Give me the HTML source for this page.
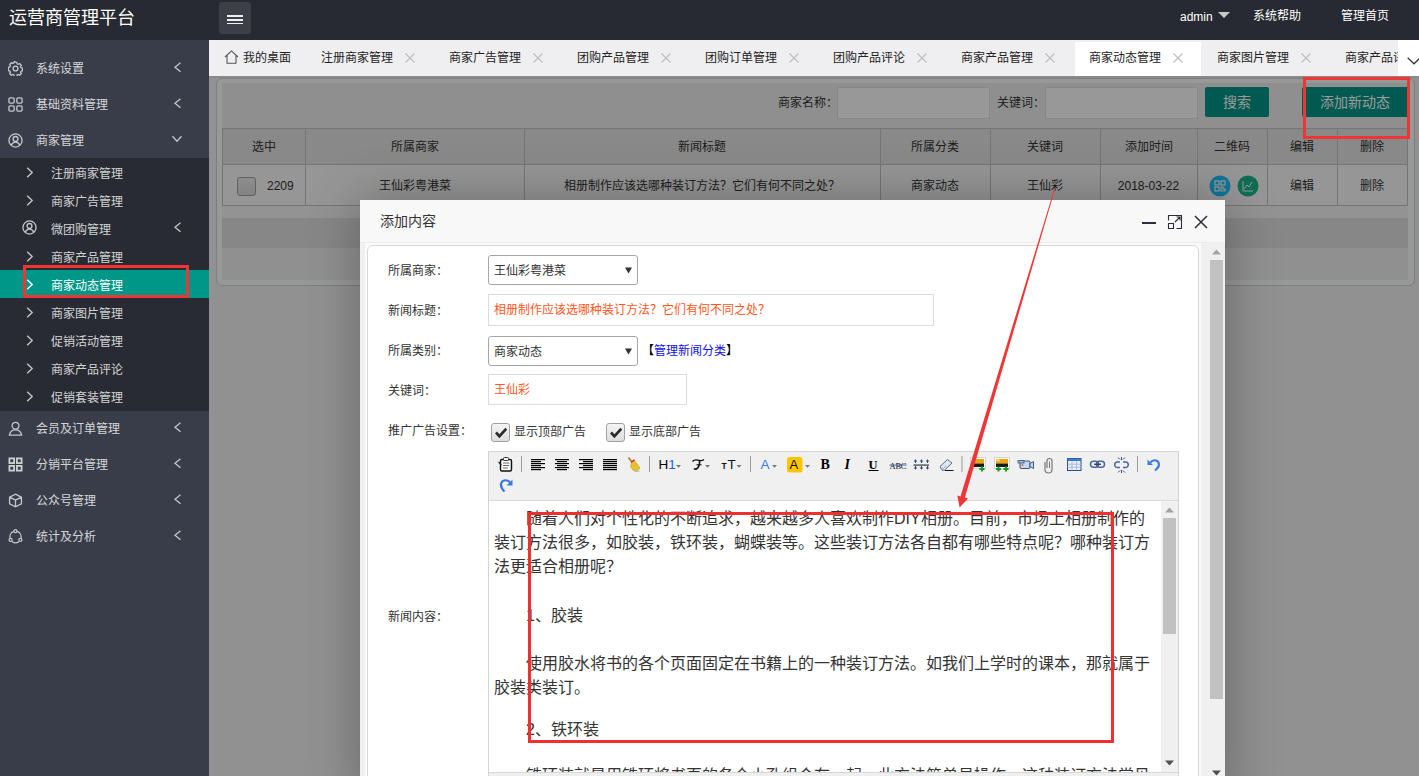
<!DOCTYPE html>
<html lang="zh-CN"><head><meta charset="utf-8">
<style>
*{box-sizing:border-box}
html,body{margin:0;padding:0}
body{width:1419px;height:776px;overflow:hidden;position:relative;font-family:"Liberation Sans",sans-serif;font-size:12px;color:#333;background:#f2f2f2}
.a{position:absolute;white-space:nowrap}
#hd{left:0;top:0;width:1419px;height:40px;background:#272a32}
#sd{left:0;top:40px;width:209px;height:736px;background:#393d49;overflow:hidden}
.nv{position:absolute;left:0;width:209px;height:36px;color:rgba(255,255,255,.8)}
.nv .t{position:absolute;left:36px;top:1px;line-height:36px;font-size:12px}
.nv svg{position:absolute}
.sub{position:absolute;left:0;top:118px;width:209px;height:253px;background:#282b33}
.dd{position:absolute;left:0;width:209px;height:28px;color:rgba(255,255,255,.8)}
.dd .t{position:absolute;left:51px;top:2px;line-height:28px;font-size:12px}
.dd svg{position:absolute;left:26px;top:9px}
#tb{left:209px;top:40px;width:1210px;height:36px;background:#efeff1;overflow:hidden}
.tab{position:absolute;top:2px;height:34px;width:126px;color:#222}
.tab .t{position:absolute;left:14px;top:0;line-height:33px;font-size:12px}
.tab .x{position:absolute;left:98px;top:11px}
#ct{left:209px;top:76px;width:1210px;height:700px;background:#f2f2f2;overflow:hidden}
</style></head><body>

<!-- HEADER -->
<div id="hd" class="a">
  <div class="a" style="left:9px;top:1px;line-height:34px;font-size:18px;color:#fff">运营商管理平台</div>
  <div class="a" style="left:219px;top:2px;width:32px;height:32px;border-radius:3px;background:#3c3f48">
    <div class="a" style="left:8px;top:13px;width:16px;height:2px;background:#eee"></div>
    <div class="a" style="left:8px;top:17px;width:16px;height:1.8px;background:#eee"></div>
    <div class="a" style="left:8px;top:21px;width:16px;height:1.4px;background:#eee"></div>
  </div>
  <div class="a" style="left:1180px;top:1px;line-height:33px;font-size:12px;color:#fff">admin</div>
  <svg class="a" style="left:1218px;top:12px" width="12" height="7"><path d="M0 0H12L6 6Z" fill="#c8c8c8"/></svg>
  <div class="a" style="left:1253px;top:0;line-height:33px;font-size:12px;color:#fff">系统帮助</div>
  <div class="a" style="left:1341px;top:0;line-height:33px;font-size:12px;color:#fff">管理首页</div>
</div>

<!-- SIDEBAR -->
<div id="sd" class="a">
<div class="nv" style="top:10px"><svg style="left:7.5px;top:10.5px" width="15" height="15" viewBox="0 0 16 16"><path d="M8 1.2l1.3.2.4 1.6 1.2.6 1.5-.8 1.8 1.8-.8 1.5.6 1.2 1.6.4v2.6l-1.6.4-.6 1.2.8 1.5-1.8 1.8-1.5-.8-1.2.6-.4 1.6H6.7l-.4-1.6-1.2-.6-1.5.8-1.8-1.8.8-1.5-.6-1.2-1.6-.4V6.7l1.6-.4.6-1.2-.8-1.5 1.8-1.8 1.5.8 1.2-.6.4-1.6z" stroke="#c5c6ca" fill="none" stroke-width="1.4"/><circle cx="8" cy="8" r="2.6" stroke="#c5c6ca" fill="none" stroke-width="1.4"/></svg><div class="t">系统设置</div><svg style="left:173px;top:12px" width="9" height="11" viewBox="0 0 9 11"><path d="M7.5 .8L2 5.3l5.5 4.5" stroke="#c5c6ca" fill="none" stroke-width="1.3"/></svg></div>
<div class="nv" style="top:46px"><svg style="left:7.5px;top:10.5px" width="15" height="15" viewBox="0 0 16 16"><rect x="1" y="1" width="5.6" height="5.6" rx="1.2" stroke="#c5c6ca" fill="none" stroke-width="1.4"/><rect x="9.4" y="1" width="5.6" height="5.6" rx="1.2" stroke="#c5c6ca" fill="none" stroke-width="1.4"/><rect x="1" y="9.4" width="5.6" height="5.6" rx="1.2" stroke="#c5c6ca" fill="none" stroke-width="1.4"/><rect x="9.4" y="9.4" width="5.6" height="5.6" rx="1.2" stroke="#c5c6ca" fill="none" stroke-width="1.4"/></svg><div class="t">基础资料管理</div><svg style="left:173px;top:12px" width="9" height="11" viewBox="0 0 9 11"><path d="M7.5 .8L2 5.3l5.5 4.5" stroke="#c5c6ca" fill="none" stroke-width="1.3"/></svg></div>
<div class="nv" style="top:82px"><svg style="left:7.5px;top:10.5px" width="15" height="15" viewBox="0 0 16 16"><circle cx="8" cy="8" r="7" stroke="#c5c6ca" fill="none" stroke-width="1.4"/><circle cx="8" cy="6.3" r="2.6" stroke="#c5c6ca" fill="none" stroke-width="1.4"/><path d="M3.4 13c.8-2.2 2.6-3.3 4.6-3.3s3.8 1.1 4.6 3.3" stroke="#c5c6ca" fill="none" stroke-width="1.4"/></svg><div class="t">商家管理</div><svg style="left:171px;top:13px" width="12" height="8" viewBox="0 0 12 8"><path d="M1.5 1.2l4.5 5 4.5-5" stroke="#c5c6ca" fill="none" stroke-width="1.3"/></svg></div>
<div class="sub">
<div class="dd" style="top:0px"><svg width="8" height="11" viewBox="0 0 8 11"><path d="M1.2 .7l5 4.8-5 4.8" stroke="#c5c6ca" fill="none" stroke-width="1.4"/></svg><div class="t">注册商家管理</div></div>
<div class="dd" style="top:28px"><svg width="8" height="11" viewBox="0 0 8 11"><path d="M1.2 .7l5 4.8-5 4.8" stroke="#c5c6ca" fill="none" stroke-width="1.4"/></svg><div class="t">商家广告管理</div></div>
<div class="dd" style="top:56px"><svg style="left:22px;top:6px" width="15" height="15" viewBox="0 0 16 16"><circle cx="8" cy="8" r="7" stroke="#c5c6ca" fill="none" stroke-width="1.4"/><circle cx="8" cy="6.3" r="2.6" stroke="#c5c6ca" fill="none" stroke-width="1.4"/><path d="M3.4 13c.8-2.2 2.6-3.3 4.6-3.3s3.8 1.1 4.6 3.3" stroke="#c5c6ca" fill="none" stroke-width="1.4"/></svg><div class="t">微团购管理</div><svg style="left:173px;top:8px" width="9" height="11" viewBox="0 0 9 11"><path d="M7.5 .8L2 5.3l5.5 4.5" stroke="#c5c6ca" fill="none" stroke-width="1.3"/></svg></div>
<div class="dd" style="top:84px"><svg width="8" height="11" viewBox="0 0 8 11"><path d="M1.2 .7l5 4.8-5 4.8" stroke="#c5c6ca" fill="none" stroke-width="1.4"/></svg><div class="t">商家产品管理</div></div>
<div class="dd" style="top:112px;background:#009688;color:#fff"><svg width="8" height="11" viewBox="0 0 8 11"><path d="M1.2 .7l5 4.8-5 4.8" stroke="#fff" fill="none" stroke-width="1.4"/></svg><div class="t">商家动态管理</div></div>
<div class="dd" style="top:140px"><svg width="8" height="11" viewBox="0 0 8 11"><path d="M1.2 .7l5 4.8-5 4.8" stroke="#c5c6ca" fill="none" stroke-width="1.4"/></svg><div class="t">商家图片管理</div></div>
<div class="dd" style="top:168px"><svg width="8" height="11" viewBox="0 0 8 11"><path d="M1.2 .7l5 4.8-5 4.8" stroke="#c5c6ca" fill="none" stroke-width="1.4"/></svg><div class="t">促销活动管理</div></div>
<div class="dd" style="top:196px"><svg width="8" height="11" viewBox="0 0 8 11"><path d="M1.2 .7l5 4.8-5 4.8" stroke="#c5c6ca" fill="none" stroke-width="1.4"/></svg><div class="t">商家产品评论</div></div>
<div class="dd" style="top:224px"><svg width="8" height="11" viewBox="0 0 8 11"><path d="M1.2 .7l5 4.8-5 4.8" stroke="#c5c6ca" fill="none" stroke-width="1.4"/></svg><div class="t">促销套装管理</div></div>
</div>
<div class="nv" style="top:370px"><svg style="left:7.5px;top:10.5px" width="15" height="15" viewBox="0 0 16 16"><circle cx="8" cy="5" r="3.6" stroke="#c5c6ca" fill="none" stroke-width="1.4"/><path d="M1.5 15c.6-3.6 3.2-5.6 6.5-5.6s5.9 2 6.5 5.6z" stroke="#c5c6ca" fill="none" stroke-width="1.4"/></svg><div class="t">会员及订单管理</div><svg style="left:173px;top:12px" width="9" height="11" viewBox="0 0 9 11"><path d="M7.5 .8L2 5.3l5.5 4.5" stroke="#c5c6ca" fill="none" stroke-width="1.3"/></svg></div>
<div class="nv" style="top:406px"><svg style="left:7.5px;top:10.5px" width="15" height="15" viewBox="0 0 16 16"><g stroke="#d0d1d4" fill="none" stroke-width="1.9"><rect x="1.5" y="1.5" width="5" height="5"/><rect x="9.5" y="1.5" width="5" height="5"/><rect x="1.5" y="9.5" width="5" height="5"/><rect x="9.5" y="9.5" width="5" height="5"/></g></svg><div class="t">分销平台管理</div><svg style="left:173px;top:12px" width="9" height="11" viewBox="0 0 9 11"><path d="M7.5 .8L2 5.3l5.5 4.5" stroke="#c5c6ca" fill="none" stroke-width="1.3"/></svg></div>
<div class="nv" style="top:442px"><svg style="left:7.5px;top:10.5px" width="15" height="15" viewBox="0 0 16 16"><path d="M8 1.2l6.3 3.2v7.2L8 14.8 1.7 11.6V4.4z M1.7 4.4L8 7.6l6.3-3.2 M8 7.6v7.2" stroke="#c5c6ca" fill="none" stroke-width="1.4"/></svg><div class="t">公众号管理</div><svg style="left:173px;top:12px" width="9" height="11" viewBox="0 0 9 11"><path d="M7.5 .8L2 5.3l5.5 4.5" stroke="#c5c6ca" fill="none" stroke-width="1.3"/></svg></div>
<div class="nv" style="top:478px"><svg style="left:7.5px;top:10.5px" width="15" height="15" viewBox="0 0 16 16"><g stroke="#c5c6ca" fill="none" stroke-width="1.4"><path d="M6.2 2.6A6 6 0 0 0 2.2 9.6"/><path d="M9.8 2.6A6 6 0 0 1 13.8 9.6"/><path d="M4.3 13.4A6 6 0 0 0 11.7 13.4"/><circle cx="8" cy="2.3" r="1.6"/><circle cx="2.8" cy="11.6" r="1.6"/><circle cx="13.2" cy="11.6" r="1.6"/></g></svg><div class="t">统计及分析</div><svg style="left:173px;top:12px" width="9" height="11" viewBox="0 0 9 11"><path d="M7.5 .8L2 5.3l5.5 4.5" stroke="#c5c6ca" fill="none" stroke-width="1.3"/></svg></div>
</div>

<!-- TABS -->
<div id="tb" class="a">
<div class="a" style="left:0;top:0;height:36px;width:98px"><svg class="a" style="left:15px;top:10px" width="15" height="14" viewBox="0 0 15 14"><path d="M1 7L7.5 .9 14 7 M3 5.3V13.3h9V5.3" stroke="#555" fill="none" stroke-width="1.1"/></svg><div class="a" style="left:34px;top:1px;line-height:35px;font-size:12px;color:#222">我的桌面</div></div>
<div class="tab" style="left:98px;"><div class="t">注册商家管理</div><svg class="x" width="10" height="10" viewBox="0 0 10 10"><path d="M.5 .5l9 9M9.5 .5L.5 9.5" stroke="#bdbdbd" stroke-width="1.1"/></svg></div>
<div class="tab" style="left:226px;"><div class="t">商家广告管理</div><svg class="x" width="10" height="10" viewBox="0 0 10 10"><path d="M.5 .5l9 9M9.5 .5L.5 9.5" stroke="#bdbdbd" stroke-width="1.1"/></svg></div>
<div class="tab" style="left:354px;"><div class="t">团购产品管理</div><svg class="x" width="10" height="10" viewBox="0 0 10 10"><path d="M.5 .5l9 9M9.5 .5L.5 9.5" stroke="#bdbdbd" stroke-width="1.1"/></svg></div>
<div class="tab" style="left:482px;"><div class="t">团购订单管理</div><svg class="x" width="10" height="10" viewBox="0 0 10 10"><path d="M.5 .5l9 9M9.5 .5L.5 9.5" stroke="#bdbdbd" stroke-width="1.1"/></svg></div>
<div class="tab" style="left:610px;"><div class="t">团购产品评论</div><svg class="x" width="10" height="10" viewBox="0 0 10 10"><path d="M.5 .5l9 9M9.5 .5L.5 9.5" stroke="#bdbdbd" stroke-width="1.1"/></svg></div>
<div class="tab" style="left:738px;"><div class="t">商家产品管理</div><svg class="x" width="10" height="10" viewBox="0 0 10 10"><path d="M.5 .5l9 9M9.5 .5L.5 9.5" stroke="#bdbdbd" stroke-width="1.1"/></svg></div>
<div class="tab" style="left:866px;background:#fff;"><div class="t">商家动态管理</div><svg class="x" width="10" height="10" viewBox="0 0 10 10"><path d="M.5 .5l9 9M9.5 .5L.5 9.5" stroke="#bdbdbd" stroke-width="1.1"/></svg></div>
<div class="tab" style="left:994px;"><div class="t">商家图片管理</div><svg class="x" width="10" height="10" viewBox="0 0 10 10"><path d="M.5 .5l9 9M9.5 .5L.5 9.5" stroke="#bdbdbd" stroke-width="1.1"/></svg></div>
<div class="tab" style="left:1122px;"><div class="t">商家产品评论</div><svg class="x" width="10" height="10" viewBox="0 0 10 10"><path d="M.5 .5l9 9M9.5 .5L.5 9.5" stroke="#bdbdbd" stroke-width="1.1"/></svg></div>
<div class="a" style="left:1189px;top:0;width:21px;height:36px;background:#fff"><svg class="a" style="left:9px;top:17px" width="14" height="8" viewBox="0 0 14 8"><path d="M.7 .7L7 6.8 13.3 .7" stroke="#333" fill="none" stroke-width="1.2"/></svg></div>
</div>

<!-- CONTENT -->
<div id="ct" class="a">
<div class="a" style="left:-209px;top:-76px;width:1419px;height:776px">
<div class="a" style="left:209px;top:76px;width:1210px;height:2px;background:#e4e4e4"></div>
<div class="a" style="left:216px;top:78px;width:1199px;height:208px;border:1px solid #d2d2d2;border-radius:6px;background:#fcfdfd"></div>
<div class="a" style="left:222px;top:83px;width:1186px;height:45px;background:#efefef"></div>
<div class="a" style="left:778px;top:88px;line-height:31px;color:#333">商家名称：</div>
<div class="a" style="left:837px;top:87px;width:153px;height:32px;border:1px solid #e2e2e2;background:#fdfdfd"></div>
<div class="a" style="left:997px;top:88px;line-height:31px;color:#333">关键词：</div>
<div class="a" style="left:1045px;top:87px;width:153px;height:32px;border:1px solid #e2e2e2;background:#fdfdfd"></div>
<div class="a" style="left:1205px;top:87px;width:64px;height:30px;border-radius:2px;background:#009688;color:#fff;font-size:14px;line-height:30px;text-align:center">搜索</div>
<div class="a" style="left:1302px;top:87px;width:106px;height:30px;border-radius:2px 0 0 2px;background:#009688;color:#fff;font-size:14px;line-height:30px;text-align:center">添加新动态</div>
<div class="a" style="left:222px;top:128px;width:1186px;height:37px;background:#e4e4e4;border:1px solid #c4c4c4"></div>
<div class="a" style="left:222px;top:165px;width:1186px;height:41px;background:#fbfbfb;border:1px solid #c4c4c4;border-top:none"></div>
<div class="a" style="left:305px;top:128px;width:1px;height:78px;background:#c4c4c4"></div>
<div class="a" style="left:524px;top:128px;width:1px;height:78px;background:#c4c4c4"></div>
<div class="a" style="left:880px;top:128px;width:1px;height:78px;background:#c4c4c4"></div>
<div class="a" style="left:990px;top:128px;width:1px;height:78px;background:#c4c4c4"></div>
<div class="a" style="left:1100px;top:128px;width:1px;height:78px;background:#c4c4c4"></div>
<div class="a" style="left:1197px;top:128px;width:1px;height:78px;background:#c4c4c4"></div>
<div class="a" style="left:1267px;top:128px;width:1px;height:78px;background:#c4c4c4"></div>
<div class="a" style="left:1337px;top:128px;width:1px;height:78px;background:#c4c4c4"></div>
<div class="a" style="left:222px;top:129px;width:83px;line-height:36px;text-align:center;color:#333">选中</div>
<div class="a" style="left:305px;top:129px;width:219px;line-height:36px;text-align:center;color:#333">所属商家</div>
<div class="a" style="left:305px;top:166px;width:219px;line-height:41px;text-align:center;color:#333">王仙彩粤港菜</div>
<div class="a" style="left:524px;top:129px;width:356px;line-height:36px;text-align:center;color:#333">新闻标题</div>
<div class="a" style="left:524px;top:166px;width:356px;line-height:41px;text-align:center;color:#333">相册制作应该选哪种装订方法？它们有何不同之处？</div>
<div class="a" style="left:880px;top:129px;width:110px;line-height:36px;text-align:center;color:#333">所属分类</div>
<div class="a" style="left:880px;top:166px;width:110px;line-height:41px;text-align:center;color:#333">商家动态</div>
<div class="a" style="left:990px;top:129px;width:110px;line-height:36px;text-align:center;color:#333">关键词</div>
<div class="a" style="left:990px;top:166px;width:110px;line-height:41px;text-align:center;color:#333">王仙彩</div>
<div class="a" style="left:1100px;top:129px;width:97px;line-height:36px;text-align:center;color:#333">添加时间</div>
<div class="a" style="left:1100px;top:166px;width:97px;line-height:41px;text-align:center;color:#333">2018-03-22</div>
<div class="a" style="left:1197px;top:129px;width:70px;line-height:36px;text-align:center;color:#333">二维码</div>
<div class="a" style="left:1267px;top:129px;width:70px;line-height:36px;text-align:center;color:#333">编辑</div>
<div class="a" style="left:1267px;top:166px;width:70px;line-height:41px;text-align:center;color:#333">编辑</div>
<div class="a" style="left:1337px;top:129px;width:70px;line-height:36px;text-align:center;color:#333">删除</div>
<div class="a" style="left:1337px;top:166px;width:70px;line-height:41px;text-align:center;color:#333">删除</div>
<div class="a" style="left:237px;top:177px;width:19px;height:19px;border:1px solid #a0a0a0;border-radius:3px;background:linear-gradient(#ececec,#dadada)"></div>
<div class="a" style="left:267px;top:166px;line-height:41px;color:#333">2209</div>
<svg class="a" style="left:1209px;top:175px" width="22" height="22" viewBox="0 0 22 22"><circle cx="11" cy="11" r="10.5" fill="#1dc4ff"/><g fill="none" stroke="#fff" stroke-width="1.2"><rect x="6" y="6" width="4" height="4"/><rect x="12" y="6" width="4" height="4"/><rect x="6" y="12" width="4" height="4"/><path d="M12 12h2v2h2v2h-4z"/></g></svg>
<svg class="a" style="left:1237px;top:175px" width="22" height="22" viewBox="0 0 22 22"><circle cx="11" cy="11" r="10.5" fill="#1bb890"/><path d="M6 6v10h10 M7 14l3-4 2 2 3-5" fill="none" stroke="#fff" stroke-width="1"/></svg>
<div class="a" style="left:222px;top:206px;width:1186px;height:12px;background:#f5f5f5"></div>
<div class="a" style="left:222px;top:218px;width:1186px;height:30px;background:#e1e1e1"></div>
<div class="a" style="left:222px;top:248px;width:1186px;height:32px;background:#f0f0f0"></div>
</div>
<div class="a" style="left:0;top:0;width:1210px;height:700px;background:rgba(0,0,0,.4)"></div>
<div class="a" style="left:-209px;top:-76px;width:1419px;height:776px">
<div class="a" style="left:360px;top:200px;width:865px;height:600px;background:#f0f0f0;box-shadow:1px 1px 50px rgba(0,0,0,.3)"></div>
<div class="a" style="left:360px;top:200px;width:865px;height:43px;background:#f8f8f8;border-bottom:1px solid #ececec"></div>
<div class="a" style="left:380px;top:200px;line-height:42px;font-size:14px;color:#333">添加内容</div>
<div class="a" style="left:1142px;top:222px;width:14px;height:2px;background:#2e2d3c"></div>
<svg class="a" style="left:1167px;top:214px" width="16" height="16" viewBox="0 0 16 16"><path d="M1.5 6.5V1.5H14.5V14.5H9.5 M1.5 9.5H6.5V14.5H1.5z M8 8L13 3 M9.5 3H13V6.5" fill="none" stroke="#2e2d3c" stroke-width="1.1"/></svg>
<svg class="a" style="left:1194px;top:215px" width="14" height="14" viewBox="0 0 14 14"><path d="M1 1L13 13M13 1L1 13" stroke="#2e2d3c" stroke-width="1.5"/></svg>
<div class="a" style="left:365px;top:243px;width:836px;height:600px;background:#fafafa"></div>
<div class="a" style="left:367px;top:245px;width:832px;height:600px;background:#fff;border:1px solid #d8d8d8;border-radius:6px"></div>
<div class="a" style="left:1208px;top:242px;width:17px;height:534px;background:#f0f0f0"></div>
<svg class="a" style="left:1212px;top:249px" width="9" height="6"><path d="M0 5.5L4.5 .5 9 5.5z" fill="#a3a3a3"/></svg>
<div class="a" style="left:1210px;top:260px;width:13px;height:439px;background:#c1c1c1"></div>
<svg class="a" style="left:1212px;top:770px" width="9" height="6"><path d="M0 .5L4.5 5.5 9 .5z" fill="#505050"/></svg>
<div class="a" style="left:388px;top:256px;line-height:30px;color:#333">所属商家：</div>
<div class="a" style="left:388px;top:296px;line-height:30px;color:#333">新闻标题：</div>
<div class="a" style="left:388px;top:336px;line-height:30px;color:#333">所属类别：</div>
<div class="a" style="left:388px;top:376px;line-height:30px;color:#333">关键词：</div>
<div class="a" style="left:388px;top:416px;line-height:30px;color:#333">推广广告设置：</div>
<div class="a" style="left:388px;top:602px;line-height:30px;color:#333">新闻内容：</div>
<div class="a" style="left:488px;top:255px;width:150px;height:30px;border:1px solid #a6a6a6;border-radius:3px;background:#fff"></div>
<div class="a" style="left:494px;top:256px;line-height:30px;color:#333">王仙彩粤港菜</div>
<svg class="a" style="left:624.5px;top:267px" width="7" height="7"><path d="M0 .5H7L3.5 6.5z" fill="#333"/></svg>
<div class="a" style="left:488px;top:294px;width:446px;height:32px;border:1px solid #dcdcdc;background:#fff"></div>
<div class="a" style="left:494px;top:295px;line-height:31px;color:#ff5722">相册制作应该选哪种装订方法？它们有何不同之处？</div>
<div class="a" style="left:488px;top:336px;width:150px;height:30px;border:1px solid #a6a6a6;border-radius:3px;background:#fff"></div>
<div class="a" style="left:494px;top:337px;line-height:30px;color:#333">商家动态</div>
<svg class="a" style="left:624.5px;top:348px" width="7" height="7"><path d="M0 .5H7L3.5 6.5z" fill="#333"/></svg>
<div class="a" style="left:642px;top:336px;line-height:30px;color:#000">【<span style="color:#1010e0">管理新闻分类</span>】</div>
<div class="a" style="left:488px;top:374px;width:199px;height:31px;border:1px solid #dcdcdc;background:#fff"></div>
<div class="a" style="left:494px;top:375px;line-height:30px;color:#ff5722">王仙彩</div>
<div class="a" style="left:491px;top:423px;width:19px;height:19px;border:1px solid #a0a0a0;border-radius:3px;background:linear-gradient(#f4f4f4,#dedede)"><svg class="a" style="left:2px;top:2px" width="14" height="14" viewBox="0 0 14 14"><path d="M1 7.6L3 5.6 5.4 8.2 11.4 1.8 13.2 3.8 5.4 12.2Z" fill="#2a2a2a"/></svg></div>
<div class="a" style="left:514px;top:417px;line-height:30px;color:#333">显示顶部广告</div>
<div class="a" style="left:606px;top:423px;width:19px;height:19px;border:1px solid #a0a0a0;border-radius:3px;background:linear-gradient(#f4f4f4,#dedede)"><svg class="a" style="left:2px;top:2px" width="14" height="14" viewBox="0 0 14 14"><path d="M1 7.6L3 5.6 5.4 8.2 11.4 1.8 13.2 3.8 5.4 12.2Z" fill="#2a2a2a"/></svg></div>
<div class="a" style="left:629px;top:417px;line-height:30px;color:#333">显示底部广告</div>
<div class="a" style="left:488px;top:451px;width:691px;height:330px;border:1px solid #d4d4d4;background:#fff"></div>
<div class="a" style="left:489px;top:452px;width:689px;height:49px;background:#f0f0f0;border-bottom:1px solid #dadada"></div>
<svg class="a" style="left:0;top:0" width="1419" height="776"><g><rect x="500.5" y="459.5" width="11" height="11.5" rx="1.5" fill="#fff" stroke="#111" stroke-width="1.4"/><rect x="503.5" y="457.5" width="5" height="3" rx="1" fill="#eee" stroke="#333" stroke-width="1"/><path d="M503 463h6M503 465.5h6M503 468h5" stroke="#555" stroke-width="0.9"/><path d="M498.5 462l3 3" stroke="#222" stroke-width="1.1"/><path d="M510 463v6" stroke="#5aa0e0" stroke-width="0.8" stroke-dasharray="1 1.2"/></g><rect x="521" y="456" width="1" height="16" fill="#9a9a9a"/><rect x="531" y="459" width="14" height="1.2" fill="#000"/><rect x="531" y="461" width="10" height="1.2" fill="#000"/><rect x="531" y="463" width="14" height="1.2" fill="#000"/><rect x="531" y="465" width="10" height="1.2" fill="#000"/><rect x="531" y="467" width="14" height="1.2" fill="#000"/><rect x="531" y="469" width="10" height="1.2" fill="#000"/><rect x="555" y="459" width="14" height="1.2" fill="#000"/><rect x="557" y="461" width="10" height="1.2" fill="#000"/><rect x="555" y="463" width="14" height="1.2" fill="#000"/><rect x="557" y="465" width="10" height="1.2" fill="#000"/><rect x="555" y="467" width="14" height="1.2" fill="#000"/><rect x="557" y="469" width="10" height="1.2" fill="#000"/><rect x="579" y="459" width="14" height="1.2" fill="#000"/><rect x="583" y="461" width="10" height="1.2" fill="#000"/><rect x="579" y="463" width="14" height="1.2" fill="#000"/><rect x="583" y="465" width="10" height="1.2" fill="#000"/><rect x="579" y="467" width="14" height="1.2" fill="#000"/><rect x="583" y="469" width="10" height="1.2" fill="#000"/><rect x="603" y="459" width="14" height="1.2" fill="#000"/><rect x="603" y="461" width="14" height="1.2" fill="#000"/><rect x="603" y="463" width="14" height="1.2" fill="#000"/><rect x="603" y="465" width="14" height="1.2" fill="#000"/><rect x="603" y="467" width="14" height="1.2" fill="#000"/><rect x="603" y="469" width="14" height="1.2" fill="#000"/><g><path d="M628.5 457.5l4.5 6" stroke="#b07a2a" stroke-width="1.6"/><path d="M631.5 462.5l3-2 5.5 7.5-3.5 3.5-3-1-3-3.5z" fill="#e8c030" stroke="#c89a18" stroke-width="0.6"/><path d="M631 462.3l3.6-2.4" stroke="#d02828" stroke-width="1.3"/><ellipse cx="637" cy="471" rx="3" ry="0.8" fill="#bbb"/></g><rect x="649" y="456" width="1" height="16" fill="#9a9a9a"/><text x="658.5" y="469.2" font-family="Liberation Sans" font-size="13.5" fill="#000">H<tspan fill="#2060e0">1</tspan></text><path d="M676 465h5l-2.5 2.8z" fill="#777"/><path d="M692.5 461.5c1.5-2 4-2 6.5-1.2 1.8.6 3.5.4 5-.8" fill="none" stroke="#111" stroke-width="1.3"/><path d="M699.5 460.5c.3 3-.5 6-2 7.6-1 1-2.6 1.2-3.6.4" fill="none" stroke="#111" stroke-width="1.6"/><path d="M696.5 464.8h5" stroke="#111" stroke-width="1.1"/><path d="M705 465h5l-2.5 2.8z" fill="#777"/><text x="721.5" y="469.2" font-family="Liberation Sans" font-size="8.5" font-weight="bold" fill="#111">T</text><text x="727.5" y="469.2" font-family="Liberation Sans" font-size="13.5" fill="#111">T</text><path d="M736.5 465h5l-2.5 2.8z" fill="#777"/><rect x="750" y="456" width="1" height="16" fill="#9a9a9a"/><text x="760.5" y="469.2" font-family="Liberation Sans" font-size="13.5" fill="#3a7be8">A</text><path d="M772 465h5l-2.5 2.8z" fill="#777"/><rect x="787" y="457" width="15.5" height="15.5" rx="2.5" fill="#ffc600"/><text x="789.5" y="469.2" font-family="Liberation Sans" font-size="13" fill="#111">A</text><path d="M805 465h5l-2.5 2.8z" fill="#777"/><text x="820.5" y="469.3" font-family="Liberation Serif" font-weight="bold" font-size="14" fill="#000">B</text><text x="844.5" y="469.3" font-family="Liberation Serif" font-weight="bold" font-style="italic" font-size="14" fill="#000">I</text><text x="868.5" y="469" font-family="Liberation Serif" font-weight="bold" font-size="12.5" fill="#000">U</text><rect x="868.5" y="470" width="10" height="1" fill="#000"/><text x="889.5" y="468.5" font-family="Liberation Serif" font-size="8.5" fill="#111" textLength="17">ABC</text><rect x="889.5" y="464.6" width="17" height="0.9" fill="#2a5a9a"/><g fill="#2a4a7a"><path d="M913.7 461.5h3.6l-1.8-2.2z"/><rect x="915.0" y="461" width="1" height="2"/><path d="M913.7 467.5h3.6l-1.8 2.2z"/><rect x="915.0" y="466" width="1" height="2"/><path d="M919.7 461.5h3.6l-1.8-2.2z"/><rect x="921.0" y="461" width="1" height="2"/><path d="M919.7 467.5h3.6l-1.8 2.2z"/><rect x="921.0" y="466" width="1" height="2"/><path d="M925.7 461.5h3.6l-1.8-2.2z"/><rect x="927.0" y="461" width="1" height="2"/><path d="M925.7 467.5h3.6l-1.8 2.2z"/><rect x="927.0" y="466" width="1" height="2"/></g><rect x="913.5" y="464.3" width="15.5" height="1.6" fill="#666"/><g><path d="M940 466.5l7.5-7 4.5 3.5-7.5 7.2h-2.5z" fill="#dfe6f2" stroke="#5a6a8a" stroke-width="1"/><path d="M942 469.8l4-4" stroke="#8a9ab8" stroke-width="0.8"/><rect x="945" y="470" width="8.5" height="1" fill="#111"/></g><rect x="961.5" y="456" width="1" height="16" fill="#9a9a9a"/><rect x="970.5" y="457.5" width="15" height="11" fill="#fff" stroke="#ccc" stroke-width="0.8"/><rect x="972.0" y="459" width="12" height="4.5" fill="#f2a20a"/><rect x="972.0" y="463.5" width="12" height="3.5" fill="#1a1a1a"/><rect x="972.5" y="459.3" width="3" height="2" fill="#fce070"/><path d="M979.4 469h5.2M982 466.4v5.2" stroke="#1a9a2a" stroke-width="2"/><rect x="994.5" y="457.5" width="15" height="11" fill="#fff" stroke="#ccc" stroke-width="0.8"/><rect x="996.0" y="459" width="12" height="4.5" fill="#f2a20a"/><rect x="996.0" y="463.5" width="12" height="3.5" fill="#1a1a1a"/><rect x="996.5" y="459.3" width="3" height="2" fill="#fce070"/><path d="M995.9 469h5.2M998.5 466.4v5.2" stroke="#1a9a2a" stroke-width="2"/><path d="M1003.4 469h5.2M1006 466.4v5.2" stroke="#1a9a2a" stroke-width="2"/><g><rect x="1020" y="461" width="10" height="7.5" rx="1.5" fill="#c8d8ea" stroke="#3a5a80" stroke-width="1.1"/><path d="M1030 463.5l3.5-2v7l-3.5-2z" fill="#c8d8ea" stroke="#3a5a80" stroke-width="1"/><rect x="1018" y="460.5" width="6" height="2.5" fill="#9ab4d4" stroke="#3a5a80" stroke-width="0.8"/><circle cx="1022.5" cy="465" r="0.8" fill="#e02020"/></g><path d="M1047 468V461a2.5 2.5 0 0 1 5 0v8.5a3.5 3.5 0 0 1-7 0V462" fill="none" stroke="#777" stroke-width="1.2"/><path d="M1049.5 461.5v6.5" stroke="#777" stroke-width="1"/><g><rect x="1067.5" y="458.5" width="13.5" height="12" fill="#e8eefa" stroke="#2a4a80" stroke-width="1"/><rect x="1067.5" y="458.5" width="13.5" height="2.5" fill="#3a78e0"/><path d="M1072 461v9.5M1076.5 461v9.5M1067.5 464.2h13.5M1067.5 467.3h13.5" stroke="#9ab0d8" stroke-width="0.8"/></g><g fill="none" stroke="#4a6a98" stroke-width="1.5"><rect x="1090.5" y="461.3" width="8" height="6" rx="3"/><rect x="1096.5" y="461.3" width="8" height="6" rx="3"/></g><rect x="1094" y="463.6" width="7" height="1.3" fill="#2a3a5a"/><g fill="none" stroke="#4a6a98" stroke-width="1.5"><path d="M1120 462h-2.5a2.8 2.8 0 0 0 0 5.6h2.5"/><path d="M1123 462h2.5a2.8 2.8 0 0 1 0 5.6h-2.5"/></g><g stroke="#2a3a5a" stroke-width="0.9"><path d="M1121.5 457v3M1118 457.5l2 2M1125 457.5l-2 2M1121.5 470v3M1118 472.5l2-2M1125 472.5l-2-2"/></g><rect x="1137" y="456" width="1" height="16" fill="#9a9a9a"/><path d="M1150.5 462.5c2-3 6.5-3 8 0 1.5 3-1 6-3.5 8" fill="none" stroke="#3a78e0" stroke-width="2.2"/><path d="M1147.5 459.5v5.5h5.5z" fill="#3a78e0"/><path d="M510 482.5c-2-3-7-3-8.5 0-1.5 3 0.5 6.5 3 9" fill="none" stroke="#3a78e0" stroke-width="2.2"/><path d="M512.5 479.5v6h-6z" fill="#3a78e0"/></svg>

<div class="a" style="left:489px;top:501px;width:672px;height:271px;overflow:hidden">
<div class="a" style="left:37px;top:6px;line-height:24px;font-size:16px;color:#333">随着人们对个性化的不断追求，越来越多人喜欢制作DIY相册。目前，市场上相册制作的</div>
<div class="a" style="left:5px;top:30px;line-height:24px;font-size:16px;color:#333">装订方法很多，如胶装，铁环装，蝴蝶装等。这些装订方法各自都有哪些特点呢？哪种装订方</div>
<div class="a" style="left:5px;top:54px;line-height:24px;font-size:16px;color:#333">法更适合相册呢？</div>
<div class="a" style="left:37px;top:103px;line-height:24px;font-size:16px;color:#333">1、胶装</div>
<div class="a" style="left:37px;top:151px;line-height:24px;font-size:16px;color:#333">使用胶水将书的各个页面固定在书籍上的一种装订方法。如我们上学时的课本，那就属于</div>
<div class="a" style="left:5px;top:175px;line-height:24px;font-size:16px;color:#333">胶装类装订。</div>
<div class="a" style="left:37px;top:217px;line-height:24px;font-size:16px;color:#333">2、铁环装</div>
<div class="a" style="left:37px;top:263px;line-height:24px;font-size:16px;color:#333">铁环装就是用铁环将书页的各个小孔组合在一起，此方法简单易操作，这种装订方法常见</div>
</div>
<div class="a" style="left:1161px;top:501px;width:17px;height:271px;background:#f0f0f0"></div>
<svg class="a" style="left:1165px;top:507px" width="9" height="6"><path d="M0 5.5L4.5 .5 9 5.5z" fill="#a3a3a3"/></svg>
<div class="a" style="left:1163px;top:518px;width:13px;height:116px;background:#c1c1c1"></div>
<svg class="a" style="left:1165px;top:760px" width="9" height="6"><path d="M0 .5L4.5 5.5 9 .5z" fill="#505050"/></svg>
<div class="a" style="left:489px;top:772px;width:689px;height:10px;background:#efefef;border-top:1px solid #d8d8d8"></div>
<div class="a" style="left:528px;top:512px;width:586px;height:231px;border:3px solid #f03030"></div>
</div>

</div>

<div class="a" style="left:23px;top:265px;width:166px;height:33px;border:3px solid #f03535"></div>
<div class="a" style="left:1303px;top:77px;width:107px;height:62px;border:3px solid #f03535"></div>
<svg class="a" style="left:0;top:0" width="1419" height="776"><path d="M1054.6 188L1055.4 188L964.9 497.6L968.0 498.6L959.6 507.5L957.4 495.4L960.5 496.4Z" fill="#f03535"/></svg>
</body></html>
